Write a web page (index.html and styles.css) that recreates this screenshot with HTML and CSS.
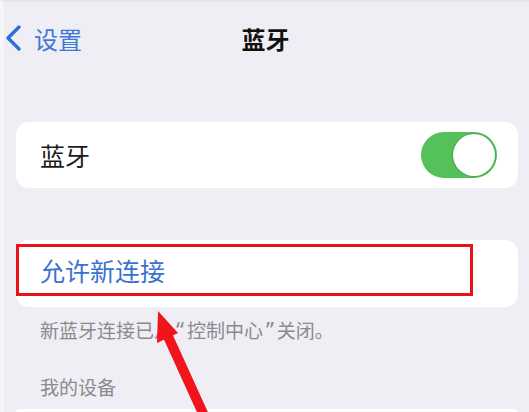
FILE: index.html
```html
<!DOCTYPE html>
<html lang="zh-CN">
<head>
    <meta charset="UTF-8">
    <meta name="viewport" content="width=device-width, initial-scale=1.0">
    <title>蓝牙</title>
    <link rel="stylesheet" href="styles.css">
</head>
<body>
    <header class="nav">
        <div class="nav-back">
            <svg class="chevron" width="18" height="28" viewBox="0 0 18 28">
                <path d="M15 3 L4 14 L15 25" fill="none" stroke="#2f6fdc" stroke-width="3.4" stroke-linecap="round" stroke-linejoin="round"/>
            </svg>
            <span>设置</span>
        </div>
        <div class="nav-title">蓝牙</div>
        <div></div>
    </header>

    <main class="content">
        <div class="card row">
            <span class="row-label">蓝牙</span>
            <div class="switch"><div class="knob"></div></div>
        </div>

        <div class="card card-link">
            <div class="highlight">
                <span class="link-label">允许新连接</span>
            </div>
        </div>
        <p class="note">新蓝牙连接已从<span class="quote">“</span>控制中心<span class="quote">”</span>关闭。</p>

        <p class="section-title">我的设备</p>
        <div class="card devices"></div>
    </main>

    <svg class="arrow" width="529" height="412" viewBox="0 0 529 412">
        <line x1="166" y1="332" x2="206" y2="420" stroke="#f0141c" stroke-width="10"/>
        <polygon points="158,311 178,333 157,343" fill="#f0141c"/>
    </svg>
</body>
</html>
```

FILE: styles.css
```css
* {
    margin: 0;
    padding: 0;
    box-sizing: border-box;
}

body {
    background: #efeef4;
    font-family: "Noto Sans CJK SC", "Noto Sans", sans-serif;
    color: #1c1c1e;
    width: 529px;
    height: 412px;
    overflow: hidden;
    border-top: 2px solid #e4e3e8;
    border-left: 4px solid #f6f6f9;
    position: relative;
}

.nav {
    display: grid;
    grid-template-columns: 1fr auto 1fr;
    align-items: center;
    height: 72px;
}

.nav-back {
    display: flex;
    align-items: center;
    gap: 12px;
    color: #3d78d8;
    font-size: 24px;
}

.chevron {
    display: block;
}

.nav-title {
    font-size: 24px;
    font-weight: 700;
    color: #111;
    margin-right: 2px;
}

.content {
    padding: 0 11px 0 12px;
}

.card {
    background: #fff;
    border-radius: 13px;
}

.row {
    margin-top: 48px;
    height: 66px;
    display: flex;
    align-items: center;
    justify-content: space-between;
    padding: 0 21px 0 24px;
}

.row-label {
    font-size: 25px;
}

.switch {
    width: 76px;
    height: 46px;
    border-radius: 23px;
    background: #54c15b;
    padding: 2px;
    display: flex;
    justify-content: flex-end;
}

.knob {
    width: 42px;
    height: 42px;
    border-radius: 50%;
    background: #fff;
    box-shadow: 0 0 1px 1px rgba(40, 120, 40, 0.35);
}

.card-link {
    margin-top: 52px;
    height: 67px;
    padding-top: 4px;
}

.highlight {
    width: 457px;
    height: 52px;
    border: 3px solid #e8121a;
    display: flex;
    align-items: center;
    padding-left: 21px;
}

.link-label {
    font-size: 25px;
    color: #3a72d0;
}

.note {
    font-size: 19px;
    color: #8a8a8f;
    padding-left: 24px;
    margin-top: 10px;
    line-height: 24px;
}

.quote {
    font-family: "Noto Sans", sans-serif;
    font-size: 22px;
    margin: 0 3px;
}

.section-title {
    font-size: 19px;
    color: #8a8a8f;
    padding-left: 24px;
    margin-top: 33px;
    line-height: 24px;
}

.devices {
    margin-top: 10px;
    height: 8px;
}

.arrow {
    position: absolute;
    left: -4px;
    top: -2px;
}
```
